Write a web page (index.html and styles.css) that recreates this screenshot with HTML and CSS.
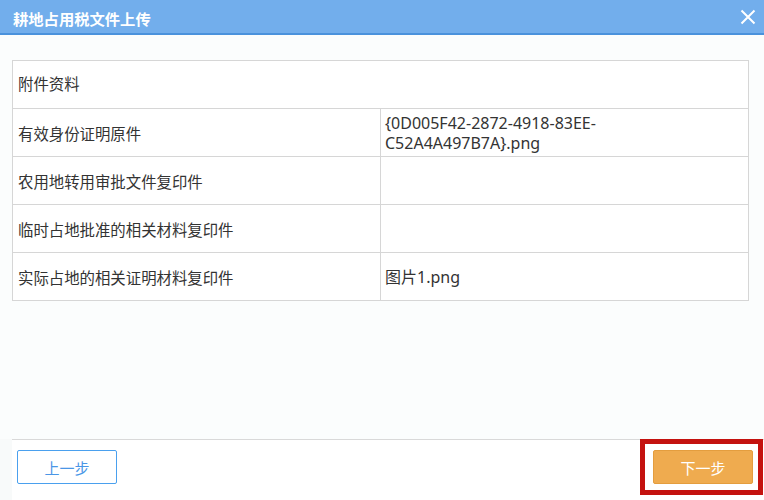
FILE: index.html
```html
<!DOCTYPE html>
<html lang="zh-CN">
<head>
<meta charset="utf-8">
<title>耕地占用税文件上传</title>
<link rel="stylesheet" href="styles.css">
</head>
<body>
<div class="dialog">
  <div class="header">
    <span class="title">耕地占用税文件上传</span>
    <svg class="close" width="16" height="16" viewBox="0 0 16 16" aria-hidden="true">
      <path d="M1.5 1.5 L14.5 14.5 M14.5 1.5 L1.5 14.5" stroke="#fff" stroke-width="2" fill="none"/>
    </svg>
  </div>
  <div class="content">
    <table class="files">
      <tr><td colspan="2">附件资料</td></tr>
      <tr><td class="name">有效身份证明原件</td><td class="val">{0D005F42-2872-4918-83EE-<br>C52A4A497B7A}.png</td></tr>
      <tr><td class="name">农用地转用审批文件复印件</td><td class="val"></td></tr>
      <tr><td class="name">临时占地批准的相关材料复印件</td><td class="val"></td></tr>
      <tr><td class="name">实际占地的相关证明材料复印件</td><td class="val">图片1.png</td></tr>
    </table>
  </div>
  <div class="footer">
    <button class="btn btn-prev">上一步</button>
    <button class="btn btn-next">下一步</button>
  </div>
  <div class="highlight"></div>
</div>
</body>
</html>
```
FILE: styles.css
```css
html, body {
  margin: 0;
  padding: 0;
}
body {
  width: 764px;
  height: 500px;
  overflow: hidden;
  background: #f8fafa;
  font-family: "Noto Sans", "Noto Sans CJK SC", sans-serif;
  color: #333;
}
.dialog {
  position: relative;
  width: 764px;
  height: 500px;
  display: flex;
  flex-direction: column;
}
.header {
  height: 33px;
  background: #72aeec;
  border-bottom: 2px solid #4a92dc;
  display: flex;
  align-items: center;
  justify-content: space-between;
  padding: 0 8px 0 13px;
  flex: none;
  box-sizing: content-box;
}
.title {
  color: #fff;
  font-family: "Noto Sans CJK SC", sans-serif;
  font-weight: bold;
  font-size: 15.3px;
  white-space: nowrap;
  padding-top: 3px;
}
.close {
  display: block;
  margin-top: 1px;
}
.content {
  background: #fbfdfd;
  padding: 25px 15px 0 12px;
  height: 404px;
  flex: none;
  box-sizing: border-box;
}
.files {
  width: 737px;
  border-collapse: collapse;
  table-layout: fixed;
  background: #fff;
}
.files td {
  border: 1px solid #d6d6d6;
  height: 48px;
  padding: 0 0 0 5px;
  font-size: 15.4px;
  line-height: 20px;
  vertical-align: middle;
  box-sizing: border-box;
}
.files td.name {
  width: 368px;
  font-family: "Noto Sans CJK SC", sans-serif;
}
.files td.val {
  font-size: 16px;
  padding-left: 4px;
}
.footer {
  margin-left: 12px;
  flex: 1;
  background: #fff;
  border-top: 1px solid #d9d9d9;
  display: flex;
  justify-content: space-between;
  align-items: flex-start;
  padding: 10px 11px 0 5px;
}
.btn {
  width: 100px;
  height: 34px;
  border-radius: 2px;
  font-family: "Noto Sans CJK SC", sans-serif;
  font-size: 15px;
  padding: 0;
  cursor: pointer;
}
.btn-prev {
  background: #fff;
  border: 1px solid #4aa0ee;
  color: #4a96e6;
}
.btn-next {
  background: #efab4f;
  border: 1px solid #e49d3e;
  color: #fff;
}
.highlight {
  position: absolute;
  left: 640px;
  top: 439px;
  width: 123px;
  height: 56px;
  border: 5px solid #c4120f;
  box-sizing: border-box;
  pointer-events: none;
}
```
